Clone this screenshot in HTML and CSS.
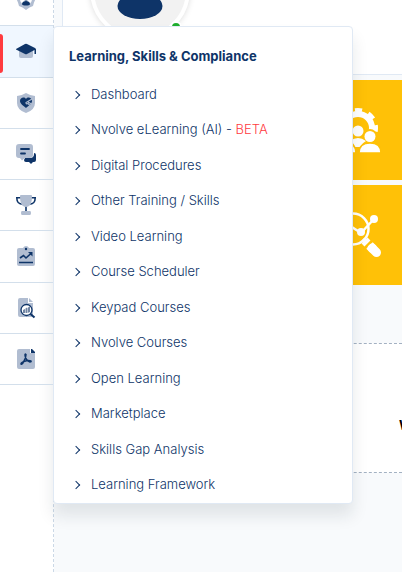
FILE: index.html
```
<!DOCTYPE html>
<html lang="en">
<head>
    <meta charset="UTF-8">
    <meta name="viewport" content="width=device-width, initial-scale=1.0">
    <title>Learning, Skills &amp; Compliance</title>
    <link rel="stylesheet" href="styles.css">
</head>
<body>
    <!-- Sidebar -->
    <nav class="sidebar" aria-label="Main">
        <ul class="nav-list">
            <li class="nav-item">
                <a href="#" class="nav-link" aria-label="People">
                    <svg class="nav-icon" viewBox="0 0 20 20">
                        <path fill="#b1bdd1" d="M10 0l3 2.500 4-.5 .5 4 2 3-1.500 3.500-1 3.500-3.500 1.500L10 20l-3.500-2.500L3 16l-1-3.500L.5 9l2-3L3 2l4 .5z"/>
                        <circle cx="10" cy="9" r="6" fill="#fff"/>
                        <circle cx="10" cy="8" r="2.500" fill="#0e3468"/>
                        <path fill="#0e3468" d="M6 14c0-4 8-4 8 0 0 2-8 2-8 0z"/>
                    </svg>
                </a>
            </li>
            <li class="nav-item active">
                <a href="#" class="nav-link" aria-label="Learning">
                    <svg class="nav-icon" viewBox="0 0 20 20">
                        <path fill="#b1bdd1" d="M3 9l7 3 7-3v6q0 2-2 2H5q-2 0-2-2z"/>
                        <path fill="#0e3468" d="M0 8l9-5q1-.5 2 0l8 4q1 .5 1 1.500V13h-1.500V9L11 13q-1 .5-2 0L0 8.500z"/>
                    </svg>
                </a>

                <!-- Flyout menu -->
                <div class="flyout">
                    <h2 class="flyout-title">Learning, Skills &amp; Compliance</h2>
                    <ul class="flyout-list">
                        <li><a href="#" class="flyout-link">Dashboard</a></li>
                        <li><a href="#" class="flyout-link">Nvolve eLearning (AI) - <span class="beta">BETA</span></a></li>
                        <li><a href="#" class="flyout-link">Digital Procedures</a></li>
                        <li><a href="#" class="flyout-link">Other Training / Skills</a></li>
                        <li><a href="#" class="flyout-link">Video Learning</a></li>
                        <li><a href="#" class="flyout-link">Course Scheduler</a></li>
                        <li><a href="#" class="flyout-link">Keypad Courses</a></li>
                        <li><a href="#" class="flyout-link">Nvolve Courses</a></li>
                        <li><a href="#" class="flyout-link">Open Learning</a></li>
                        <li><a href="#" class="flyout-link">Marketplace</a></li>
                        <li><a href="#" class="flyout-link">Skills Gap Analysis</a></li>
                        <li><a href="#" class="flyout-link">Learning Framework</a></li>
                    </ul>
                </div>
            </li>
            <li class="nav-item">
                <a href="#" class="nav-link" aria-label="Health and safety">
                    <svg class="nav-icon" viewBox="0 0 20 20">
                        <path fill="#b1bdd1" d="M10 0q4 2.500 9 3v7q0 7-9 10-9-3-9-10V3q5-.5 9-3z"/>
                        <path fill="#0e3468" d="M10 6c2-3 6-1 6 2 0 3-4 5-6 7-2-2-6-4-6-7 0-3 4-5 6-2z"/>
                        <path fill="none" stroke="#b1bdd1" stroke-width="1.200" d="M16 6l-6 3.500q0 2 2 1l2 2M12 9l3.500 2"/>
                    </svg>
                </a>
            </li>
            <li class="nav-item">
                <a href="#" class="nav-link" aria-label="Messages">
                    <svg class="nav-icon" viewBox="0 0 20 20">
                        <path fill="#0e3468" d="M18 9q2 0 2 2v5q0 2-2 2h-1l-2 2-2-2h-3q-2 0-2-2l1-2h5q4 0 4-4z"/>
                        <path fill="#b1bdd1" d="M3 0h11q3 0 3 3v8q0 3-3 3H9l-3 2.500-2-2.500H3q-3 0-3-3V3q0-3 3-3z"/>
                        <path stroke="#0e3468" stroke-width="1.800" stroke-linecap="round" d="M5 5h8M5 9.500h4"/>
                    </svg>
                </a>
            </li>
            <li class="nav-item">
                <a href="#" class="nav-link" aria-label="Awards">
                    <svg class="nav-icon" viewBox="0 0 20 20">
                        <path fill="none" stroke="#0e3468" stroke-width="1.600" d="M5 2.800H.8C.8 7 2 9.200 7 9.200M15 2.800h4.200c0 4.200-1.200 6.400-6.200 6.400M10 10v7"/>
                        <path fill="#b1bdd1" d="M5 0h10q1 0 1 1 0 8-3 10-3 2-6 0-3-2-3-10 0-1 1-1zM6 16h8q1 0 1 2t-1 2H6q-1 0-1-2t1-2z"/>
                    </svg>
                </a>
            </li>
            <li class="nav-item">
                <a href="#" class="nav-link" aria-label="Performance">
                    <svg class="nav-icon" viewBox="0 0 20 20">
                        <path fill="#b1bdd1" d="M3 1h4q1-2 3-2t3 2h4q2 0 2 2v14q0 2-2 2H3q-2 0-2-2V3q0-2 2-2z"/>
                        <circle cx="10" cy="2" r="1.200" fill="#0e3468"/>
                        <path fill="none" stroke="#0e3468" stroke-width="1.600" d="M4 11l3.500-2.500L10 11l5-4.500M3 15.500h14"/>
                        <path fill="#0e3468" d="M12 5h4.500v4.500z"/>
                    </svg>
                </a>
            </li>
            <li class="nav-item">
                <a href="#" class="nav-link" aria-label="Audit">
                    <svg class="nav-icon" viewBox="0 0 20 20">
                        <path fill="#b1bdd1" d="M4 0h8v5h5v12q0 2-2 2H4q-2 0-2-2V2q0-2 2-2zM13 0l4 4h-4z"/>
                        <circle cx="10.500" cy="12" r="5.500" fill="#fff" stroke="#0e3468" stroke-width="1.300"/>
                        <path stroke="#0e3468" stroke-width="2" d="M14.500 16l4 3.500"/>
                        <path fill="#7185a3" d="M7 12l2-1v4H7zM9.500 10.500L11 9.500V15H9.500zM11.500 10L14 8v6l-2.500 1z"/>
                    </svg>
                </a>
            </li>
            <li class="nav-item">
                <a href="#" class="nav-link" aria-label="Documents">
                    <svg class="nav-icon" viewBox="0 0 20 20">
                        <path fill="#b1bdd1" d="M3 0h11v4h5v14q0 2-2 2H3q-2 0-2-2V2q0-2 2-2z"/>
                        <path fill="#0e3468" d="M15 0h1l3 3v1h-4z"/>
                        <path fill="none" stroke="#0e3468" stroke-width="1.500" stroke-linecap="round" stroke-linejoin="round" d="M10 5.500q-1-1-1 .5 0 2 1.500 4.500 1 1.500 3.500 2.500 1.500 0 1-1-2.500-1-7 .5-3 1-3 2.500 1 1 2.500-2Q10 9 10 5.500z"/>
                    </svg>
                </a>
            </li>
        </ul>
    </nav>

    <!-- Page content -->
    <main class="content">
        <section class="profile">
            <div class="avatar">
                <svg class="avatar-picture" viewBox="0 0 92 92" aria-hidden="true">
                    <circle cx="46" cy="28" r="14" fill="#0e3468"/>
                    <ellipse cx="46" cy="62" rx="22.500" ry="13" fill="#0e3468"/>
                </svg>
                <span class="status"></span>
            </div>
        </section>
        <section class="tiles">
            <a href="#" class="tile" aria-label="Teams">
                <svg class="tile-icon" viewBox="0 0 48 48">
                    <circle cx="24" cy="22" r="14" fill="none" stroke="#fff" stroke-width="6"/>
                    <circle cx="24" cy="22" r="17.500" fill="none" stroke="#fff" stroke-width="5" stroke-dasharray="7 6.740" stroke-dashoffset="3.500"/>
                    <path fill="#ffc107" d="M11 44V25h26v19z"/>
                    <circle cx="36" cy="30" r="7" fill="#ffc107"/>
                    <circle cx="12" cy="30" r="7" fill="#ffc107"/>
                    <circle cx="24" cy="25" r="5.500" fill="#fff"/>
                    <path fill="#fff" d="M16 35q8-6 16 0-4 2-5 6h-6q-1-4-5-6z"/>
                    <path fill="#fff" stroke="#ffc107" stroke-width="1.500" d="M1 47q0-10 10.500-10T22 47zM25 47q0-10 11-10t11 10z"/>
                    <circle cx="12" cy="30.500" r="5.500" fill="#fff"/>
                    <circle cx="36" cy="30.500" r="5.500" fill="#fff"/>
                </svg>
            </a>
            <a href="#" class="tile" aria-label="Insights">
                <svg class="tile-icon" viewBox="0 0 48 48">
                    <circle cx="19" cy="18" r="15.500" fill="none" stroke="#fff" stroke-width="2.500"/>
                    <path fill="none" stroke="#fff" stroke-width="2.500" d="M5 22l8-9 14 9L40 8"/>
                    <circle cx="13" cy="13" r="4" fill="#fff"/>
                    <circle cx="27" cy="21" r="4" fill="#fff"/>
                    <circle cx="40" cy="8" r="4" fill="#fff"/>
                    <path stroke="#fff" stroke-width="4" d="M29 28l4 4"/>
                    <path stroke="#fff" stroke-width="4" d="M29 34l6-6"/>
                    <path stroke="#fff" stroke-width="9" d="M35.500 34.500l4 4"/>
                    <path stroke="#fff" stroke-width="9" stroke-linecap="round" d="M38 37l4.500 4.500"/>
                    <path stroke="#ffc107" stroke-width="1.500" d="M30 38l8-8"/>
                </svg>
            </a>
        </section>
        <section class="notice">
            <strong class="notice-title">W</strong>
        </section>
    </main>
</body>
</html>
```
FILE: styles.css
```
* {
    margin: 0;
    padding: 0;
    box-sizing: border-box;
}

body {
    font-family: Inter, "Liberation Sans", sans-serif;
    font-size: 13px;
    line-height: 1.5;
    background: #f8fafc;
    color: #0e3468;
    min-height: 100vh;
    overflow: hidden;
    display: flex;
}

ul {
    list-style: none;
}

a {
    color: inherit;
    text-decoration: none;
}

/* Sidebar */
.sidebar {
    position: relative;
    z-index: 2;
    flex: 0 0 54px;
    background: #fff;
    border-right: 1px dashed #cbd8e6;
}

.nav-list {
    margin-top: -25px;
}

.nav-item {
    position: relative;
    border-bottom: 1px solid #d3dfeb;
}

.nav-link {
    display: flex;
    align-items: center;
    justify-content: center;
    font-size: 14px;
    height: calc(30px + 1.45em);
    padding-right: 1px;
}

.nav-item.active {
    background: #f0f7ff;
}

.nav-item.active::before {
    content: "";
    position: absolute;
    left: 0;
    top: 8px;
    bottom: 4px;
    width: 3px;
    border-radius: 0 3px 3px 0;
    background: #ff3b3f;
}

.nav-icon {
    width: 20px;
    height: 20px;
    overflow: visible;
}

/* Flyout menu */
.flyout {
    position: absolute;
    left: 100%;
    top: 0;
    width: 300px;
    background: #fff;
    border: 1px solid #e0e9f4;
    border-radius: 4px;
    box-shadow: 0 12px 16px rgba(20, 40, 50, 0.1);
}

.flyout-title {
    padding: 20px 15px 10px;
    font-size: 13px;
    font-weight: 700;
}

.flyout-link {
    display: flex;
    align-items: center;
    padding: 8px 19px;
    font-weight: 300;
    white-space: pre;
}

.flyout-link::before {
    content: "";
    width: 5px;
    height: 5px;
    margin-right: 12px;
    border-top: 1px solid #0e3468;
    border-right: 1px solid #0e3468;
    transform: rotate(45deg);
}

.beta {
    color: #ff3b3f;
}

/* Content */
.content {
    flex: 1;
    min-width: 0;
    padding-left: 8px;
}

.profile {
    display: flex;
    height: 75px;
    padding-left: 27px;
    background: #fff;
    border: 1px solid #e0e9f4;
    border-top: 0;
    border-right: 0;
}

.avatar {
    position: relative;
    width: 100px;
    height: 100px;
    margin-top: -60px;
    border: 4px solid #fff;
    border-radius: 50%;
    background: #f2f2f2;
    box-shadow: 0 0 6px rgba(0, 0, 0, 0.15);
}

.avatar-picture {
    display: block;
    width: 100%;
}

.status {
    position: absolute;
    right: 4px;
    bottom: 3px;
    width: 12px;
    height: 12px;
    border: 2px solid #fff;
    border-radius: 50%;
    background: #1fae2e;
}

.tiles {
    display: grid;
    gap: 5px;
    padding-top: 5px;
}

.tile {
    display: flex;
    align-items: center;
    justify-content: flex-end;
    height: 100px;
    padding-right: 20px;
    background: #ffc107;
}

.tile-icon {
    width: 48px;
    height: 48px;
}

/* Notice */
.notice {
    display: flex;
    align-items: center;
    justify-content: flex-end;
    height: 130px;
    margin-top: 58px;
    padding-top: 36px;
    background: #fff;
    border-top: 1px dashed #a3b1c2;
    border-bottom: 1px dashed #a3b1c2;
}

.notice-title {
    width: 3px;
    font-size: 13px;
    color: #000;
}
```
